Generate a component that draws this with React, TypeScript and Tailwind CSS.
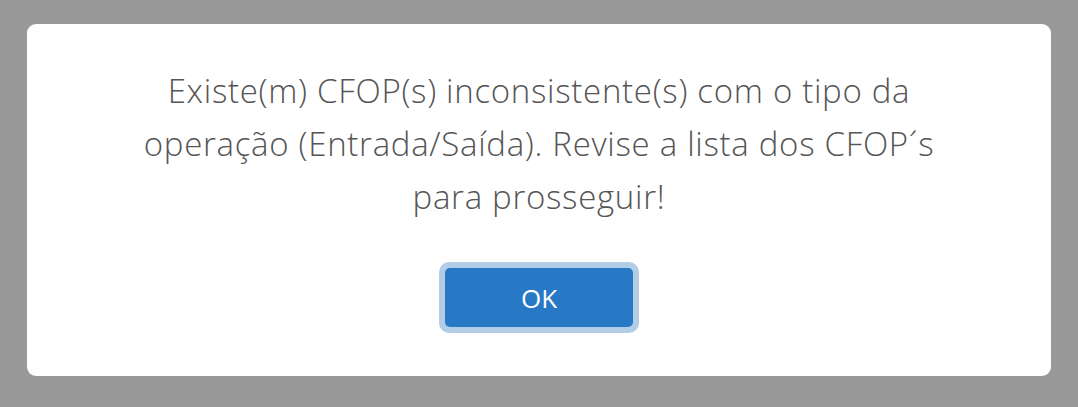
export default function App() {
  return (
    <div className="w-[1078px] h-[407px] bg-[#999999] pt-[24px] px-[27px]" style={{ fontFamily: '"Open Sans", "Noto Sans", sans-serif' }}>
      <div className="w-[1024px] h-[352px] bg-white rounded-[9px] flex flex-col items-center pt-[40px]">
        <p className="text-center text-[33px] leading-[53px] tracking-[0.7px] text-[#555555] whitespace-nowrap font-light">
          Existe(m) CFOP(s) inconsistente(s) com o tipo da<br />
          operação (Entrada/Saída). Revise a lista dos CFOP´s<br />
          para prosseguir!
        </p>
        <button className="mt-[39px] w-[200px] h-[71px] rounded-[10px] bg-[#b3cde6] p-[6px]">
          <span className="flex w-full h-full items-center justify-center rounded-[5px] bg-[#2779c6] text-white text-[26px] font-normal pt-[2px]">OK</span>
        </button>
      </div>
    </div>
  );
}
